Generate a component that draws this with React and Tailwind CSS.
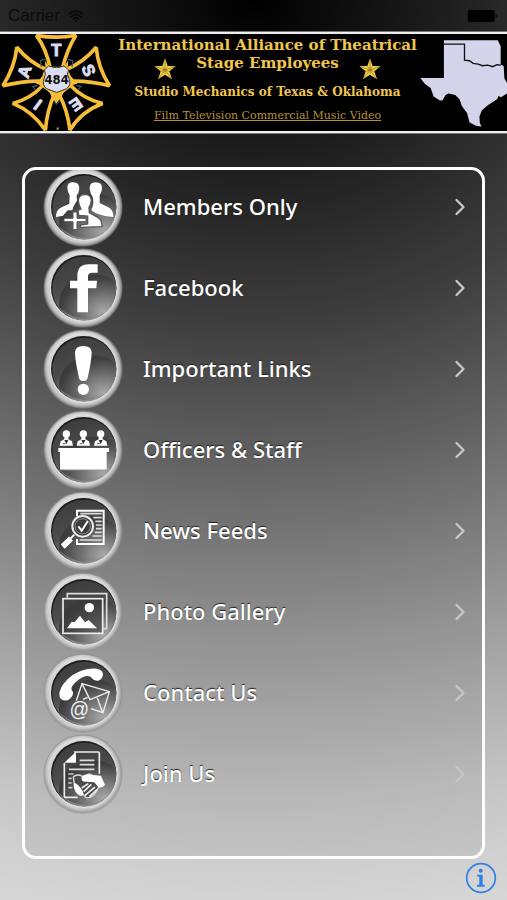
import { ChevronRight, Wifi } from "lucide-react";

const MembersIcon = () => (
  <g fill="#fff">
    <path d="M73 62 Q73 45 91 46 Q109 46 109 65 Q108 78 101 85 L102 101 Q90 118 88 130 L74 130 L60 146 L39 150 Q39 128 56 121 L79 110 L80 85 Q74 75 73 62 Z" />
    <path d="M140 65 Q139 46 158 46 Q178 46 177 64 Q176 78 170 85 L170 108 L196 121 Q211 128 211 150 Q188 150 163 140 Q146 132 145 128 Q155 110 149 90 Q141 78 140 65 Z" />
    <path
      d="M106 101 Q107 83 126 82 Q145 83 145 101 Q144 114 138 121 L139 137 L164 151 Q178 158 177 179 L112 181 L112 174 L134 171 L134 147 L107 145 L105 130 L114 126 Q107 114 106 101 Z"
      stroke="#555"
      strokeWidth="4"
    />
    <path d="M90 135 H102 V154 H129 V164 H102 V188 H90 V164 H63 V154 H90 Z" stroke="#555" strokeWidth="3" />
  </g>
);

const FacebookIcon = () => (
  <path
    fill="#fff"
    d="M164 49 V74 H147 Q135 74 135 86 V98 H162 L160 121 H135 V193 H103 V121 H81 V98 H103 V82 Q104 49 137 49 Z"
  />
);

const ExclamationIcon = () => (
  <g fill="#fff">
    <path d="M96 70 Q97 51 121 51 Q145 51 146 70 Q145 100 134 146 Q132 156 121 156 Q110 156 108 146 Q97 100 96 70 Z" />
    <circle cx="121" cy="181" r="17" />
  </g>
);

const Officer = ({ x }) => (
  <g transform={`translate(${x} 0)`}>
    <circle cx="0" cy="72" r="11" fill="#fff" />
    <path d="M-6 82 H6 V88 L17 94 L20 107 H-20 L-17 94 L-6 88 Z" fill="#fff" />
    <path d="M-6 90 L0 103 L6 90 Z" fill="#333" />
    <path d="M-11 101 H-3" stroke="#555" strokeWidth="3" />
  </g>
);

const OfficersIcon = () => (
  <>
    <Officer x={70} />
    <Officer x={121} />
    <Officer x={173} />
    <path d="M46 114 H198 V126 H191 V179 H51 V126 H46 Z" fill="#fff" />
    <path d="M51 180 H191" stroke="#999" strokeWidth="2" />
  </>
);

const NewsIcon = () => (
  <>
    <path d="M102 76 V59 H182 V159 H102 V144" fill="none" stroke="#fff" strokeWidth="6" />
    <path
      d="M112 68 H176 M151 80 H176 M157 91 H176 M159 102 H176 M159 113 H176 M155 124 H176 M148 135 H176 M110 147 H176"
      stroke="#ddd"
      strokeWidth="5"
    />
    <circle cx="119" cy="106" r="31" fill="#3c3c3c" stroke="#eee" strokeWidth="6" />
    <circle cx="119" cy="106" r="23" fill="none" stroke="#bbb" strokeWidth="2" />
    <path d="M106 106 L116 119 L134 91" fill="none" stroke="#fff" strokeWidth="6" />
    <path d="M94 131 L83 142" stroke="#fff" strokeWidth="6" />
    <path d="M84 143 L59 167" stroke="#fff" strokeWidth="17" />
  </>
);

const GalleryIcon = () => (
  <>
    <path d="M73 77 V65 H191 V170 H181" fill="none" stroke="#ddd" strokeWidth="5" />
    <rect x="60" y="80" width="119" height="104" fill="#3b3b3b" fillOpacity="0.6" stroke="#eee" strokeWidth="5" />
    <circle cx="139" cy="107" r="14" fill="#fff" />
    <path d="M72 169 L86 149 L94 151 L111 131 L126 151 L137 144 L162 169 Z" fill="#fff" />
  </>
);

const ContactIcon = () => (
  <>
    <path
      d="M49 119 Q56 91 88 67 Q124 43 162 47 Q181 51 180 65 Q178 79 165 83 Q153 85 146 74 Q140 66 126 70 Q104 78 88 99 Q82 109 90 117 Q92 127 81 137 Q68 148 54 138 Q48 132 49 119 Z"
      fill="#fff"
    />
    <g fill="none" stroke="#eee" strokeWidth="4">
      <path d="M100 143 L117 92 L199 116 L180 179 L144 167" />
      <path d="M117 92 L141 140 L199 116 M134 133 L120 139 M163 135 L179 179" />
    </g>
    <text
      x="109"
      y="188"
      fill="#f2f2f2"
      fontFamily="Liberation Sans, sans-serif"
      fontSize="58"
      textAnchor="middle"
    >
      @
    </text>
  </>
);

const JoinIcon = () => (
  <>
    <path
      d="M93 54 H165 Q169 54 169 58 V119 M104 190 H69 Q64 190 64 185 V87"
      fill="none"
      stroke="#eee"
      strokeWidth="5"
    />
    <path d="M99 53 V86 H64 Z" fill="#fff" />
    <path d="M110 79 H154 M110 92 H154 M78 106 H154" stroke="#ddd" strokeWidth="5" />
    <path d="M76 120 H92 M76 133 H86 M76 147 H86 M76 161 H88" stroke="#ccc" strokeWidth="5" />
    <path
      d="M91 129 Q101 118 118 127 L139 120 L171 135 L168 158 L156 178 Q143 194 129 190 L94 151 Z"
      fill="#4b4b4b"
      stroke="#ddd"
      strokeWidth="4"
    />
    <path d="M116 129 Q130 119 149 123 L174 125 L186 153 Q176 163 166 160 L154 145 L130 143 Q113 145 116 129 Z" fill="#fff" />
    <path d="M94 146 Q106 150 117 168 Q125 180 117 185 Q108 187 98 174 Q89 155 94 146 Z" fill="#fff" />
    <path d="M122 173 L145 151 M126 184 L156 159 M139 188 L162 167 M116 162 L136 149" stroke="#eee" strokeWidth="5" />
  </>
);

const menuItems = [
  { label: "Members Only", icon: MembersIcon },
  { label: "Facebook", icon: FacebookIcon },
  { label: "Important Links", icon: ExclamationIcon },
  { label: "Officers & Staff", icon: OfficersIcon },
  { label: "News Feeds", icon: NewsIcon },
  { label: "Photo Gallery", icon: GalleryIcon },
  { label: "Contact Us", icon: ContactIcon },
  { label: "Join Us", icon: JoinIcon },
];

// Gradients shared by all of the round menu icons
const IconGradients = () => (
  <svg className="absolute size-0" aria-hidden="true">
    <defs>
      <radialGradient id="ring" cx="0.5" cy="0.5" r="0.5">
        <stop offset="0.82" stopColor="#b4b4b4" />
        <stop offset="0.88" stopColor="#cfcfcf" />
        <stop offset="0.94" stopColor="#aaa" />
        <stop offset="1" stopColor="#888" stopOpacity="0.5" />
      </radialGradient>
      <linearGradient id="ringLight" x1="0" y1="0" x2="0.3" y2="1">
        <stop offset="0" stopColor="#fff" stopOpacity="0.5" />
        <stop offset="0.6" stopColor="#fff" stopOpacity="0" />
      </linearGradient>
      <linearGradient id="disc" x1="0.3" y1="0" x2="0.6" y2="1">
        <stop offset="0" stopColor="#3c3c3c" />
        <stop offset="0.5" stopColor="#4c4c4c" />
        <stop offset="1" stopColor="#909090" />
      </linearGradient>
      <radialGradient id="gloss" cx="0.8" cy="0.85" r="0.8">
        <stop offset="0" stopColor="#aaa" />
        <stop offset="0.5" stopColor="#727272" />
        <stop offset="1" stopColor="#3c3c3c" />
      </radialGradient>
    </defs>
  </svg>
);

const RoundIcon = ({ children }) => (
  <svg viewBox="0 0 240 240" className="size-20 shrink-0" aria-hidden="true">
    <circle cx="120" cy="120" r="119" fill="url(#ring)" />
    <circle cx="120" cy="120" r="115" fill="url(#ringLight)" />
    <circle cx="122" cy="121" r="102" fill="#dcdcdc" />
    <circle cx="122" cy="119" r="98" fill="#1c1c1c" />
    <circle cx="124" cy="122" r="96" fill="url(#disc)" />
    <path d="M48 178 Q46 102 126 82 Q186 72 216 104 Q224 158 188 192 Q118 240 48 178 Z" fill="url(#gloss)" />
    {children}
  </svg>
);

const StatusBar = () => (
  <div className="flex h-8 items-center justify-between px-2 text-[#0b0b0b]">
    <div className="flex items-center gap-2">
      <span className="text-[17px]">Carrier</span>
      <Wifi className="size-4" strokeWidth={3} />
    </div>
    <svg viewBox="0 0 33 13" className="h-3 w-8" aria-label="Battery full">
      <rect width="29" height="13" rx="2" fill="#000" />
      <path d="M30 4 Q33 6.500 30 9 Z" fill="#000" />
    </svg>
  </div>
);

const UnionLogo = () => (
  <svg viewBox="0 100 345 292" className="h-[97px] w-[115px] shrink-0" aria-label="IATSE Local 484">
    <g fill="#000" stroke="#f6bd38" strokeWidth="11" strokeLinejoin="bevel">
      <path d="M109 104 Q170 115 228 104 Q202 145 187 204 H151 Q139 145 109 104 Z" />
      <path d="M50 140 Q88 186 139 207 L127 242 Q70 240 8 256 Q44 200 50 140 Z" />
      <path d="M289 140 Q250 186 199 207 L211 242 Q268 240 329 256 Q294 200 289 140 Z" />
      <path d="M129 254 L163 281 Q141 330 136 389 Q97 333 38 309 Q94 294 129 254 Z" />
      <path d="M211 254 L177 281 Q203 330 210 389 Q244 333 308 309 Q248 294 211 254 Z" />
    </g>
    <path
      d="M134 180 L149 200 H190 L205 180 L202 214 L232 250 L200 259 L184 290 L169 309 L155 290 L142 261 L108 250 L138 214 Z"
      fill="#f6bd38"
    />
    <path
      d="M136 176 L121 180 L124 199 M203 176 L219 180 L216 199 M112 255 L98 258 L106 268 M229 255 L243 258 L235 268 M160 302 L169 311 L179 302"
      fill="none"
      stroke="#34536f"
      strokeWidth="4"
    />
    <path
      d="M146 196 Q169 206 192 196 L206 208 Q198 221 207 234 Q215 254 199 265 L170 276 L140 265 Q125 254 132 234 Q140 221 133 208 Z"
      fill="#dcdcf0"
      stroke="#333"
      strokeWidth="3"
    />
    <g
      fill="#dcdcf0"
      fontFamily="Liberation Sans, sans-serif"
      fontWeight="700"
      fontSize="50"
      textAnchor="middle"
      stroke="#dcdcf0"
      strokeWidth="3"
    >
      <text x="169" y="166">T</text>
      <text transform="translate(73 213) rotate(-72)" y="17">A</text>
      <text transform="translate(266 209) rotate(68)" y="17">S</text>
      <text transform="translate(113 313) rotate(-144)" y="17">I</text>
      <text transform="translate(228 312) rotate(145)" y="17">E</text>
    </g>
    <text
      x="170"
      y="250"
      fill="#111"
      fontFamily="DejaVu Sans, sans-serif"
      fontWeight="700"
      fontSize="35"
      textAnchor="middle"
    >
      484
    </text>
    <circle cx="173" cy="385" r="4" fill="#8a7a35" />
  </svg>
);

const StateMap = () => (
  <svg viewBox="500 102 262 291" className="h-[97px] w-[87px] shrink-0" aria-label="Texas and Oklahoma">
    <path
      d="M572 120 H734 L743 138 V193 L752 198 L754 235 L763 251 V280 L744 292 L736 288 L733 297 L705 315 L686 332 L679 350 L680 368 L685 381 L666 377 L649 367 L642 340 L626 318 L619 298 L606 285 L586 281 L577 285 L568 301 L560 302 L541 290 L532 264 L515 252 L501 234 H572 Z"
      fill="#d3d3ea"
    />
    <path
      d="M572 132 H634 V180 L649 182 L660 190 L675 192 L688 197 L704 195 L719 200 L732 194 L744 195"
      fill="none"
      stroke="#111"
      strokeWidth="4"
    />
  </svg>
);

const Star = () => (
  <svg viewBox="0 0 66 66" className="mt-1 size-[22px]" aria-hidden="true">
    <path d="M33 1 L41 24 L65 25 L46 40 L54 64 L33 50 L12 64 L20 40 L1 25 L25 24 Z" fill="#f5cf4a" />
    <path
      d="M33 5 V36 L40 26 M60 27 L33 36 L44 40 M51 60 L33 36 V47 M15 60 L33 36 L22 40 M6 27 L33 36 L26 26"
      fill="none"
      stroke="#8a6c1c"
      strokeWidth="2"
    />
  </svg>
);

const Banner = () => (
  <header className="flex border-y-2 border-[#eee] bg-black outline outline-[#777]">
    <UnionLogo />
    <div className="flex min-w-0 flex-1 flex-col items-center pt-0.5 font-['DejaVu_Serif',serif] font-bold whitespace-nowrap text-[#f0c64c]">
      <h1 className="text-[15px] leading-[18px]">International Alliance of Theatrical</h1>
      <div className="flex items-start gap-5">
        <Star />
        <p className="text-[15px] leading-[18px]">Stage Employees</p>
        <Star />
      </div>
      <p className="mt-1 text-xs leading-4">Studio Mechanics of Texas &amp; Oklahoma</p>
      <p className="mt-2 text-[11px] leading-4 font-normal text-[#b8912f] underline">
        Film Television Commercial Music Video
      </p>
    </div>
    <StateMap />
  </header>
);

const InfoIcon = () => (
  <svg viewBox="0 0 96 96" className="size-8" aria-hidden="true">
    <circle cx="48" cy="48" r="43" fill="none" stroke="#2d7fe6" strokeWidth="5" />
    <circle cx="47" cy="26" r="6" fill="#2d7fe6" />
    <path d="M37 38 H53 V68 H59 V74 H36 V68 H43 V44 H37 Z" fill="#2d7fe6" />
  </svg>
);

const App = () => {
  return (
    <div className="flex min-h-screen flex-col bg-[radial-gradient(ellipse_240%_110%_at_50%_0,#000_0%,#1e1e1e_16%,#424242_33%,#6e6e6e_49%,#9e9e9e_66%,#c6c6c6_82%,#d8d8d8_94%)] font-['Liberation_Sans',sans-serif]">
      <IconGradients />
      <StatusBar />
      <Banner />

      {/* Menu */}
      <nav className="mx-[22px] mt-[34px] flex-1 overflow-hidden rounded-[14px] border-3 border-white bg-black/5">
        <ul className="-mt-1">
          {menuItems.map(({ label, icon: Icon }) => (
            <li key={label}>
              <a href="#" className="flex h-[81px] items-center pr-2 pl-[18px]">
                <RoundIcon>
                  <Icon />
                </RoundIcon>
                <span className="ml-5 flex-1 font-['Noto_Sans',sans-serif] text-[22px] font-medium text-white [text-shadow:0_-1px_1px_#222]">
                  {label}
                </span>
                <ChevronRight className="size-7 text-[#c7c7c9]" strokeWidth={2} />
              </a>
            </li>
          ))}
        </ul>
      </nav>

      <footer className="flex h-[41px] items-start justify-end pt-[3px] pr-[10px]">
        <button type="button" aria-label="Info">
          <InfoIcon />
        </button>
      </footer>
    </div>
  );
};

export default App;
